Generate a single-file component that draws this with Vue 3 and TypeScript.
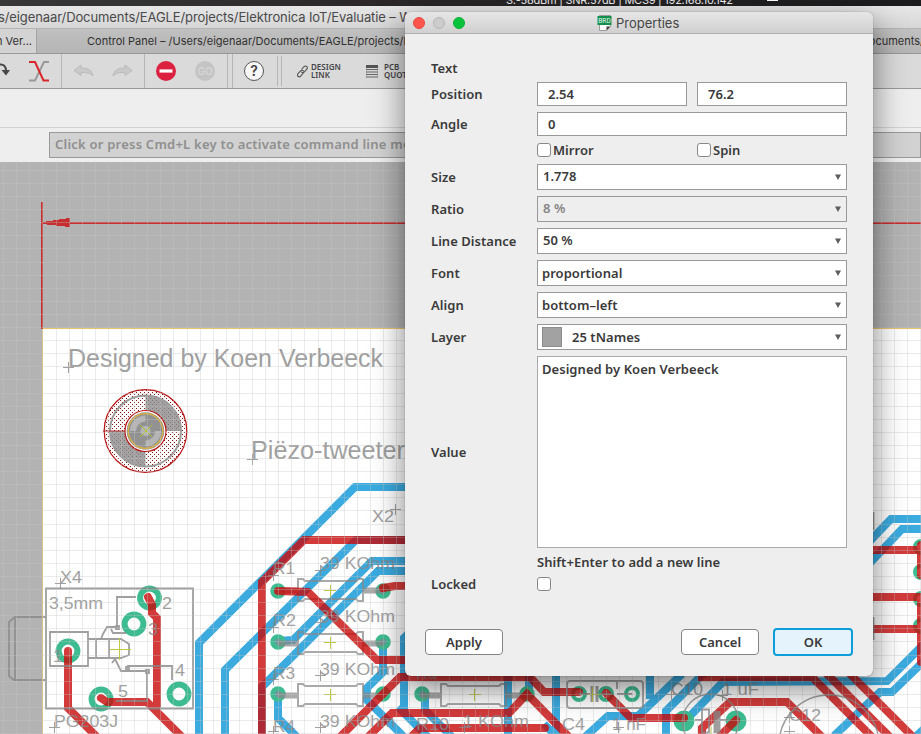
<script setup lang="ts">
import { ref } from 'vue'

type Label = [string, number, number, number]

const PITCH = 13.1
const columns = Array.from({ length: 71 }, (_, i) => Math.floor(3.6 + i * PITCH))
const lines = Array.from({ length: 44 }, (_, i) => Math.floor(170.3 + i * PITCH))

const blueTraces = [
  '405,487 355,487 199,643 199,740',
  '410,540 356,540 225,670 225,740',
  '410,571 378,571 262,687 262,740',
  '410,561 372,561 293,640 278,641',
  '383,642 383,672 367,688 367,700 405,738',
  '410,632 404,638 404,712',
  '278,694 278,718 300,740',
  '425,694 425,710 452,737',
  '398,707 430,739',
  '508,670 508,740',
  '529,670 529,692',
  '556,670 556,740',
  '544,724 560,740',
  '650,670 650,699',
  '584,738 608,716 638,716 682,674',
  '666,740 666,711 704,673',
  '690,716 723,682 887,681 925,643',
  '834,736 880,692 892,692 925,660',
  '869,542 891,519 925,519',
  '869,564 902,529 925,529',
  '910,742 925,728',
]

const redTraces = [
  '410,540 304,540 262,582 262,740',
  '278,591 308,592 377,660 410,660',
  '383,588 395,586 410,586',
  '335,742 400,677 530,677 544,692 579,692',
  '365,740 392,713 509,713 527,694 572,740',
  '408,740 420,728 545,728',
  '606,693 631,718 684,718',
  '702,672 702,677 812,677 875,740',
  '827,674 893,740',
  '846,670 916,740',
  '702,740 702,728 730,702 787,702 825,740',
  '736,720 716,740',
  '865,550 921,550',
  '865,597 921,597',
  '865,629 921,629',
  '921,545 921,575',
  '921,600 921,662',
  '148,597 152,605 152,613 157,618 157,706',
  '101,698 107,702 147,702 185,740',
  '68,651 68,708 100,740',
]

const bigPads = [[149.5, 598], [134, 624], [68, 651], [101, 699], [179, 694]]
const smallPads = [
  [278, 591], [383, 591], [278, 642], [383, 642], [278, 694], [383, 694],
  [422, 694], [527, 694],
]
const ringPads = [[579, 694], [606, 694], [632, 694], [921, 547], [921, 572], [921, 599], [921, 626]]
const solidPads = [[684, 721], [736, 721]]
const resistors = [[298, 578], [298, 631], [298, 683], [441, 683]]

const smallText: Label[] = [
  ['X2', 372, 522, 22], ['R1', 273, 574, 22], ['39 KOhm', 320, 569, 75],
  ['R2', 273, 626, 23], ['39 KOhm', 320, 622, 75], ['R3', 273, 679, 22],
  ['39 KOhm', 320, 675, 75], ['R4', 273, 732, 22], ['39 KOhm', 320, 727, 75],
  ['X4', 60, 583, 22], ['3,5mm', 49, 609, 54], ['2', 162, 609, 10], ['3', 148, 635, 10],
  ['1', 53, 662, 10], ['5', 118, 697, 10], ['4', 175, 676, 10], ['PG203J', 54, 727, 64],
  ['R9', 416, 679, 21], ['R10', 416, 730, 33], ['1 KOhm', 463, 727, 66], ['C4', 562, 730, 23],
  ['1 nF', 612, 730, 34], ['C10', 671, 695, 32], ['1 uF', 722, 695, 37], ['C12', 789, 721, 32],
]
const origins = [
  [68, 367], [252, 459], [395, 509], [273, 575], [320, 570], [273, 627], [320, 622],
  [273, 679], [320, 675], [273, 731], [320, 727], [60, 583], [54, 727], [464, 727],
  [618, 727], [722, 695], [789, 717], [789, 731], [671, 694],
]

const x = ref('2.54')
const y = ref('76.2')
const angle = ref('0')
const note = ref('Designed by Koen Verbeeck')
const combos = [
  { label: 'Size', value: '1.778', raised: true },
  { label: 'Ratio', value: '8 %', raised: true, disabled: true },
  { label: 'Line Distance', value: '50 %', raised: true },
  { label: 'Font', value: 'proportional' },
  { label: 'Align', value: 'bottom–left' },
  { label: 'Layer', value: '25 tNames', swatch: true },
]
</script>

<template>
  <div class="screen">
    <div class="menubar">
      <span class="wifi">S:-58dBm | SNR:57dB | MCS9 | 192.168.10.142</span>
      <i class="blip"></i>
    </div>
    <div class="window-title"><span>s/eigenaar/Documents/EAGLE/projects/Elektronica IoT/Evaluatie – W</span></div>
    <div class="tabs">
      <div class="tab active">n Ver...</div>
      <div class="tab other"><span>Control Panel – /Users/eigenaar/Documents/EAGLE/projects/Ele</span><span class="tail">ocuments/</span></div>
    </div>
    <div class="toolbar">
      <div class="group g1">
        <svg width="12" height="34" viewBox="0 54 12 34" fill="none"><path d="M-2 65c6-2 8 2 8 6" stroke="#484848" stroke-width="2" /><path d="M1.500 70h8.500l-4 5.500z" fill="#484848" /><path d="M-1 72v6" stroke="#484848" stroke-width="2" /></svg>
        <svg width="20" height="34" viewBox="29 54 20 34" fill="none" stroke-width="2"><path d="M49 62h-5l-9 18.500h-6" stroke="#999" /><path d="M29 62h6l8.500 18.500H49" stroke="#d9262b" /></svg>
      </div>
      <div class="group g2">
        <svg width="21" height="14" viewBox="0 0 21 14"><path d="M1 6.500 8 1v3c7 0 11 2 12 8-3-3-6-3.500-12-3.500v3z" fill="#c9c9c9" stroke="#b5b5b5" stroke-width=".8" /></svg>
        <svg width="21" height="14" viewBox="0 0 21 14"><path d="M20 6.500 13 1v3C6 4 2 6 1 12c3-3 6-3.500 12-3.500v3z" fill="#c9c9c9" stroke="#b5b5b5" stroke-width=".8" /></svg>
      </div>
      <div class="group g3">
        <svg width="20" height="20" viewBox="0 0 20 20"><circle cx="10" cy="10" r="10" fill="#dc2140" /><path d="M3.500 10h13" stroke="#fff" stroke-width="3.200" /></svg>
        <div class="go">GO</div>
      </div>
      <div class="slot"></div>
      <div class="group g4"><div class="help">?</div></div>
      <div class="slot second"></div>
      <div class="link">
        <svg width="11" height="13" viewBox="0 0 11 13" fill="none" stroke="#555" stroke-width="1.100"><path d="M4.500 4.500 7.200 1.500c2-1.500 4.200.8 2.600 2.600L7.200 7C6 8.200 4.500 7.600 4.300 6.500" /><path d="m6.300 8.200-2.600 3c-2 1.600-4.300-.6-2.700-2.500l2.800-3c1.200-1 2.500-.4 2.800.8" /></svg>
        <p>DESIGN<br />LINK</p>
      </div>
      <div class="link quote">
        <svg width="12" height="13" viewBox="0 0 12 13"><path d="M0 0h12v3H0z" fill="#555" /><path d="M0 4.500h12M0 7h12M0 9.500h12M0 12h12" stroke="#666" /><path d="M.3 3v9.500M11.700 3v9.500" stroke="#888" stroke-width=".6" /></svg>
        <p>PCB<br />QUOTE</p>
      </div>
    </div>
    <div class="params"></div>
    <div class="command"><div>Click or press Cmd+L key to activate command line mode</div></div>

    <svg class="board" width="921" height="572" viewBox="0 162 921 572">
      <defs>
        <pattern id="dots" width="4" height="4" patternUnits="userSpaceOnUse">
          <path d="M0 0h1v1H0zM2 2h1v1H2z" fill="#8c1616" shape-rendering="crispEdges" />
        </pattern>
      </defs>
      <rect y="162" width="921" height="572" fill="#b3b3b3" />
      <rect x="43" y="329" width="880" height="410" fill="#fff" />

      <g opacity=".8" fill="none" stroke="#0996d8" stroke-width="8">
        <polyline v-for="(p, i) in blueTraces" :key="i" :points="p" />
      </g>

      <g fill="none" stroke="#3cbc90">
        <circle v-for="(p, i) in bigPads" :key="'b' + i" :cx="p[0]" :cy="p[1]" r="9.400" stroke-width="6" fill="#fff" />
        <circle v-for="(p, i) in ringPads" :key="'r' + i" :cx="p[0]" :cy="p[1]" r="6" stroke-width="4" fill="#fff" />
        <circle v-for="(p, i) in smallPads" :key="'s' + i" :cx="p[0]" :cy="p[1]" r="5.500" stroke-width="4.500" fill="#6a9c9c" />
        <circle v-for="(p, i) in solidPads" :key="'f' + i" :cx="p[0]" :cy="p[1]" r="8" stroke-width="5" fill="#3cbc90" />
      </g>

      <g opacity=".72" fill="none" stroke="#888" stroke-width="2">
        <g v-for="(r, i) in resistors" :key="i">
          <path :d="`M${r[0] - 20} ${r[1] + 12.500}h20M${r[0] + 65} ${r[1] + 12.500}h20`" stroke-width="6" />
          <path :d="`M${r[0]} ${r[1] + 1}h5l2 2h51l2-2h5v22h-5l-2-2h-51l-2 2h-5z`" />
        </g>
      </g>

      <g opacity=".8" fill="none" stroke="#c90b0b" stroke-width="8" stroke-linecap="round">
        <polyline v-for="(p, i) in redTraces" :key="i" :points="p" />
      </g>

      <g opacity=".8" fill="none" stroke="#888" stroke-width="1.800">
        <path d="M46 588.500h147v120H46zM50 632h38v34H50zM46 617H15l-6 5v54l5 4h32M15 617v63M88 639h33l8 5v11l-8 3H88M96 639v19M109 639v19" />
        <path d="M136 597h-19v30h-10l-4 7-2 5M111 629l2 4h13M115 659l-3 4m3-4 6 12h26v30h-31M126 668l2-2h44v14" />
        <path d="M116 626h3v3h-3zM146 670h3v3h-3zM126 667h3v2h-3z" />
        <rect x="567" y="681" width="76" height="27" rx="3" />
        <path d="M579 694h11M600 694h12M617 694h15M617 682v7M617 699v8" />
        <path d="M592 686v16M597 686v16" stroke-width="3" />
        <circle cx="710.500" cy="722" r="28" stroke-width="1.500" />
        <circle cx="829" cy="745" r="50" stroke-width="1.500" />
        <path d="M695 720h7M702 709.500h7v23h-7z" />
        <path d="M717 711v22" stroke-width="7" />
        <path d="M720 720h9M873.500 512v18M873.500 617v23" />
      </g>

      <g opacity=".8" fill="#888" font-family="'Liberation Sans', Arial, sans-serif">
        <text x="68" y="367" font-size="25" textLength="315" lengthAdjust="spacingAndGlyphs">Designed by Koen Verbeeck</text>
        <text x="251" y="459" font-size="25" textLength="154" lengthAdjust="spacingAndGlyphs">Piëzo-tweeter</text>
        <text v-for="(t, i) in smallText" :key="i" :x="t[1]" :y="t[2]" font-size="17" :textLength="t[3]" lengthAdjust="spacingAndGlyphs">{{ t[0] }}</text>
      </g>
      <g stroke="#888" opacity=".8" shape-rendering="crispEdges">
        <path v-for="(o, i) in origins" :key="i" :d="`M${o[0] - 5} ${o[1] + 0.5}h11M${o[0] + 0.5} ${o[1] - 5}v11`" />
      </g>

      <g class="hole">
        <circle cx="145.500" cy="431" r="41.300" fill="url(#dots)" stroke="#b81414" stroke-width="1.200" />
        <path d="M145.500 431V396a35.500 35.500 0 0 1 35.500 35zM145.500 431v35.500A35.500 35.500 0 0 1 110 431z" fill="#8b8b8b" fill-opacity=".8" />
        <circle cx="145.500" cy="431" r="35.500" fill="none" stroke="#9b9b9b" stroke-width="2" />
        <circle cx="145.500" cy="431" r="20.500" fill="#fff" stroke="#b81414" stroke-width="1.200" />
        <circle cx="145.500" cy="431" r="18.800" fill="#929292" />
        <path d="M130 431a15.500 15.500 0 0 1 15.500-15.500v6a9.500 9.500 0 0 0-9.500 9.500zM161 431a15.500 15.500 0 0 1-15.500 15.500v-6a9.500 9.500 0 0 0 9.500-9.500z" fill="#b5b5b5" />
        <circle cx="145.500" cy="431" r="17.300" fill="none" stroke="#dcb33d" stroke-width="1.200" />
        <circle cx="145.500" cy="431" r="5" fill="#b5b5b5" />
        <path d="m140 425 12 12m0-12-12 12" stroke="#b2c52e" />
        <path d="M103 431h22" stroke="#b02828" />
      </g>

      <g stroke="#c0c83f" stroke-width="1">
        <path d="M110 649.500h21M119.500 638v22M324 590.500h12M330.500 585v12M324 642.500h12M330.500 637v12M324 694.500h12M330.500 689v12M469 694.500h12M474.500 689v12M588 694.500h13M592.500 687v15M711 726.500v8" />
      </g>

      <g shape-rendering="crispEdges">
        <path d="M42.500 329v410" stroke="#e6c373" />
        <path d="M43 328.500h880" stroke="#ebc56c" />
        <path d="M42 202v127M42 223h880" stroke="#c72e30" stroke-width="2" />
        <path d="M43 222h3v-1h7v-1h6v-1h7v-1h4v9h-5v-1h-9v-1h-9v-1h-4z" fill="#c72e30" />
      </g>

      <g stroke="#c3c3c3" stroke-opacity=".34" shape-rendering="crispEdges">
        <path v-for="c in columns" :key="'c' + c" :d="`M${c + 0.5} 162v572`" />
        <path v-for="l in lines" :key="'l' + l" :d="`M0 ${l + 0.5}h921`" />
      </g>
    </svg>

    <section class="dialog">
      <header>
        <i class="light red"></i><i class="light idle"></i><i class="light green"></i>
        <h1>
          <svg width="15" height="16" viewBox="0 0 15 16"><path d="M2.500.5h11v11l-4 4h-7z" fill="#f8f8f8" stroke="#888" stroke-width=".8" /><path d="M9.500 15.500v-4h4z" fill="#444" /><path d="M.5 1h14v9H.5z" fill="#128f4d" /><text x="1.200" y="7.800" font-size="6.500" textLength="12.500" fill="#e6f9ee" font-family="Roboto, sans-serif">BRD</text></svg>
          <span>Properties</span>
        </h1>
      </header>
      <div class="form">
        <div class="row heading"><label>Text</label></div>
        <div class="row h24">
          <label>Position</label>
          <div class="pair"><input v-model="x" /><input v-model="y" /></div>
        </div>
        <div class="row h24"><label>Angle</label><input v-model="angle" /></div>
        <div class="row h16">
          <label></label>
          <div class="pair"><span class="check"><i class="box"></i>Mirror</span><span class="check"><i class="box"></i>Spin</span></div>
        </div>
        <div v-for="c in combos" :key="c.label" class="row h26">
          <label>{{ c.label }}</label>
          <div class="combo" :class="{ disabled: c.disabled, raised: c.raised }">
            <i v-if="c.swatch" class="swatch"></i>
            <span>{{ c.value }}</span>
            <svg width="6" height="6" viewBox="0 0 6 6"><path d="M0 .5h6L3 6z" fill="#5d5d5d" /></svg>
          </div>
        </div>
        <div class="row value"><label>Value</label><textarea v-model="note" spellcheck="false"></textarea></div>
        <div class="row h16"><label></label><span class="hint">Shift+Enter to add a new line</span></div>
        <div class="row h16"><label>Locked</label><i class="box"></i></div>
      </div>
      <footer>
        <button>Apply</button>
        <span class="grow"></span>
        <button>Cancel</button>
        <button class="primary">OK</button>
      </footer>
    </section>
  </div>
</template>

<style>
body {
  margin: 0;
  overflow: hidden;
}
</style>

<style scoped>
* {
  box-sizing: border-box;
}
.screen {
  position: relative;
  width: 921px;
  height: 734px;
  overflow: hidden;
  display: flex;
  flex-direction: column;
  background: #eee;
  font-family: Inter, "Liberation Sans", sans-serif;
}
.menubar {
  flex: none;
  height: 6px;
  background: linear-gradient(90deg, #383838, #2c2829 40%, #1c1c1e);
  overflow: hidden;
  display: flex;
  align-items: flex-end;
  padding-left: 506px;
  color: #eee;
  font-size: 11px;
  letter-spacing: -0.25px;
  line-height: 12px;
  white-space: nowrap;
}
.wifi {
  width: 261px;
}
.blip {
  width: 11px;
  height: 1px;
  margin-bottom: 5px;
  background: #fff;
}
.window-title {
  flex: none;
  height: 23px;
  background: linear-gradient(#e7e7e7, #d6d6d6);
  border-bottom: 1px solid #b4b4b4;
  color: #4a4a4a;
  font-size: 13px;
  letter-spacing: -0.1px;
  text-indent: -2px;
  line-height: 22px;
  white-space: nowrap;
}
.tabs {
  flex: none;
  height: 25px;
  display: flex;
  border-bottom: 1px solid #989898;
  font-size: 11px;
  line-height: 25px;
  color: #303030;
  white-space: nowrap;
}
.tab.active {
  width: 37px;
  background: #d3d3d3;
  border-right: 1px solid #a4a4a4;
  text-indent: -4px;
}
.tab.other {
  flex: 1;
  display: flex;
  justify-content: space-between;
  background: linear-gradient(#c0c0c0, #b5b5b5);
  padding-left: 50px;
}
.tail {
  margin-right: -3px;
}
.toolbar {
  flex: none;
  height: 35px;
  background: #dadada;
  border-bottom: 1px solid #999;
  display: flex;
  align-items: center;
}
.group {
  height: 34px;
  display: flex;
  align-items: center;
  border-right: 1px solid #b5b5b5;
}
.g1 {
  width: 62px;
  gap: 17px;
}
.g2 {
  width: 83px;
  gap: 18px;
  padding-left: 11px;
}
.g3 {
  width: 83px;
  gap: 19px;
  padding-left: 11px;
}
.slot {
  width: 5px;
  height: 34px;
  border-right: 1px solid #b5b5b5;
}
.slot.second {
  height: 30px;
  width: 4px;
}
.g4 {
  width: 45px;
  height: 30px;
  padding-left: 11px;
}
.go,
.help {
  width: 20px;
  height: 20px;
  border-radius: 50%;
  text-align: center;
}
.go {
  background: #c4c4c4;
  color: #d6d6d6;
  font-size: 10px;
  line-height: 20px;
  font-weight: 600;
}
.help {
  border: 1px solid #555;
  background: #f6f6f6;
  color: #444;
  font-size: 14px;
  line-height: 18px;
  font-weight: 600;
}
.link {
  display: flex;
  align-items: center;
  gap: 3px;
  margin-left: 15px;
  width: 54px;
}
.link p {
  margin: 0;
  font: 650 8px/8px "Noto Sans", sans-serif;
  color: #444;
}
.quote {
  gap: 6px;
}
.params {
  flex: none;
  height: 39px;
  border-bottom: 1px solid #d3d3d3;
}
.command {
  flex: none;
  height: 34px;
  padding: 4px 0 4px 49px;
}
.command div {
  height: 26px;
  border: 1px solid #999;
  background: #d2d2d2;
  padding-left: 5px;
  color: #8f8f8f;
  font: 560 13px/23px "Noto Sans", sans-serif;
  letter-spacing: 0.22px;
  white-space: nowrap;
}
.board {
  flex: none;
  display: block;
}
.dialog {
  position: absolute;
  left: 405px;
  top: 12px;
  width: 468px;
  height: 664px;
  border-radius: 6px;
  background: #eee;
  box-shadow: 0 0 1px rgba(0, 0, 0, 0.6), 0 12px 32px rgba(0, 0, 0, 0.5);
  color: #3a3a3a;
  font: 570 13px/16px "Noto Sans", sans-serif;
  letter-spacing: 0.04px;
  display: flex;
  flex-direction: column;
}
header {
  height: 22px;
  border-radius: 6px 6px 0 0;
  border-bottom: 1px solid #b0b0b0;
  background: linear-gradient(#e6e6e6, #d0d0d0);
  display: flex;
  align-items: center;
  gap: 8px;
  padding-left: 8px;
}
.light {
  width: 12px;
  height: 12px;
  border-radius: 50%;
}
.light.red {
  background: #ff554d;
  border: 1px solid #e9483f;
}
.light.idle {
  background: #ccc;
  border: 1px solid #b6b6b6;
}
.light.green {
  background: #0ac33d;
  border: 1px solid #0ab035;
}
h1 {
  display: flex;
  align-items: center;
  gap: 4px;
  margin: 0 0 0 124px;
  font: 400 13px/20px Inter, sans-serif;
  letter-spacing: 0;
  color: #454545;
}
.form {
  display: flex;
  flex-direction: column;
  gap: 6px;
  padding: 22px 26px 0 26px;
}
.row {
  display: grid;
  grid-template-columns: 106px 310px;
  align-items: center;
}
.heading {
  height: 20px;
  padding-top: 4px;
}
.h24 {
  height: 24px;
}
.h16 {
  height: 16px;
}
.h26 {
  height: 26px;
}
label {
  white-space: nowrap;
}
.pair {
  display: grid;
  grid-template-columns: 150px 150px;
  gap: 10px;
}
input {
  width: 100%;
  height: 24px;
  border: 1px solid #999;
  background: #fff;
  padding: 0 10px;
  font: inherit;
  letter-spacing: inherit;
  color: inherit;
  outline: none;
}
.check {
  display: flex;
  align-items: center;
  gap: 2px;
}
.box {
  width: 14px;
  height: 14px;
  border: 1px solid #888;
  border-radius: 3px;
  background: #fff;
}
.combo {
  height: 26px;
  border: 1px solid #999;
  background: #fff;
  display: flex;
  align-items: center;
  padding: 0 5px 0 4px;
}
.combo span {
  flex: 1;
}
.combo.raised span {
  padding: 0 0 2px 1px;
}
.combo.disabled {
  background: #eee;
}
.combo.disabled span {
  color: #858585;
}
.swatch {
  width: 20px;
  height: 20px;
  background: #a2a2a2;
  border: 1px solid #8e8e8e;
  margin-right: 10px;
}
.value {
  height: 192px;
}
textarea {
  height: 192px;
  width: 310px;
  border: 1px solid #aaa;
  background: #fff;
  padding: 4px;
  margin: 0;
  resize: none;
  outline: none;
  font: inherit;
  letter-spacing: inherit;
  color: inherit;
}
footer {
  display: flex;
  align-items: center;
  height: 28px;
  margin: 36px 20px 0;
}
button {
  width: 78px;
  height: 26px;
  border: 1px solid #858585;
  border-radius: 4px;
  background: #fff;
  padding: 0;
  font: inherit;
  letter-spacing: inherit;
  color: inherit;
}
.grow {
  flex: 1;
}
.primary {
  width: 80px;
  height: 28px;
  margin-left: 14px;
  border: 2px solid #0d9ddb;
  background: #e5f4fc;
}
</style>
